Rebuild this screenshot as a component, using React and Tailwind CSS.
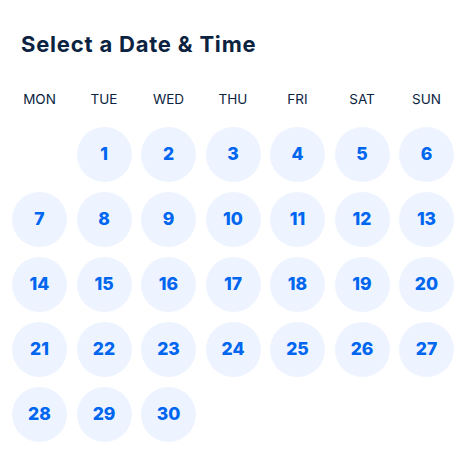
import React from 'react';

const DAYS = ['MON', 'TUE', 'WED', 'THU', 'FRI', 'SAT', 'SUN'];

// September starts on a Tuesday, so one blank slot before the 1st
const cells = [null, ...Array.from({ length: 30 }, (_, i) => i + 1)];

export default function App() {
  return (
    <div className="w-[473px] h-[473px] bg-white" style={{ fontFamily: 'Inter, "Noto Sans", sans-serif' }}>
      <div className="pt-[30px] px-[12px]">
        <h2 className="pl-[9px] text-[22px] font-bold leading-[28px] text-[#0b2340] tracking-[0.8px]">
          Select a Date &amp; Time
        </h2>

        <div className="grid grid-cols-[repeat(7,55px)] gap-x-[9.5px] mt-[33px]">
          {DAYS.map((d) => (
            <div key={d} className="text-center text-[13.5px] leading-[16px] text-[#0b2340]">
              {d}
            </div>
          ))}
        </div>

        <div className="grid grid-cols-[repeat(7,55px)] gap-x-[9.5px] gap-y-[10px] mt-[20px]">
          {cells.map((n, i) =>
            n ? (
              <button
                key={i}
                className="w-[55px] h-[55px] rounded-full bg-[#edf4ff] text-[#0066f0] text-[17.5px] font-extrabold flex items-center justify-center"
              >
                {n}
              </button>
            ) : (
              <div key={i} />
            )
          )}
        </div>
      </div>
    </div>
  );
}
